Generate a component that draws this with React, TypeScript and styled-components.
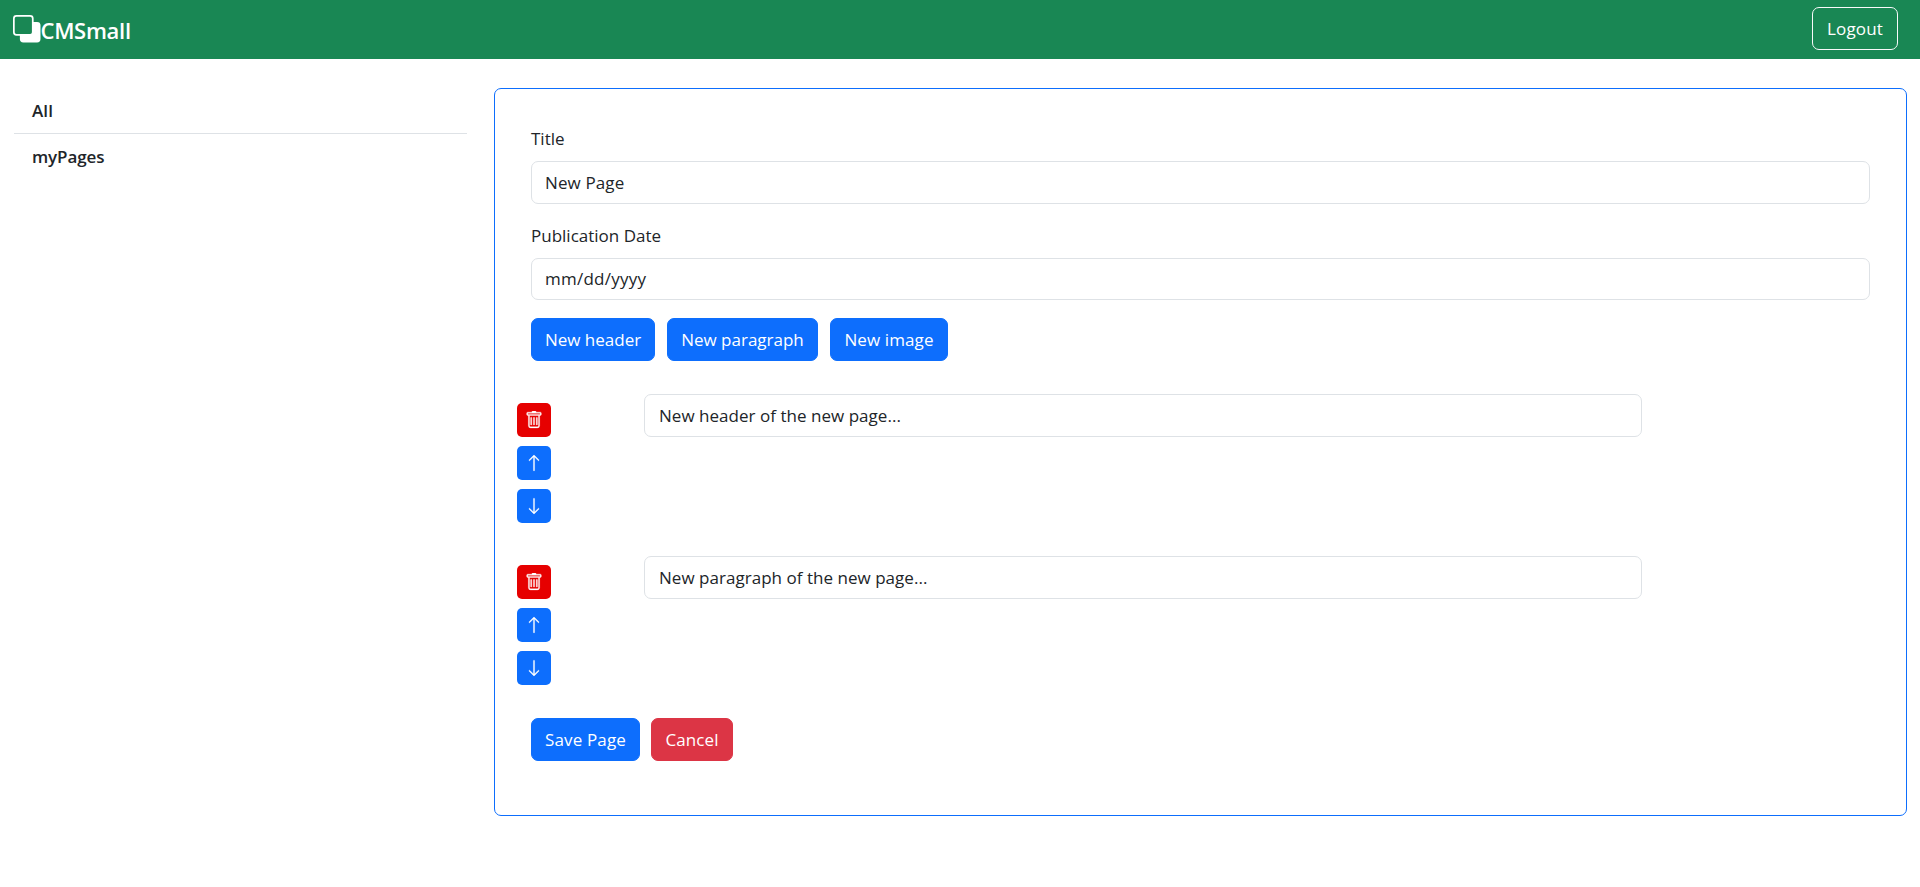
import React from "react";
import styled, { createGlobalStyle } from "styled-components";
import { BsSubtract, BsTrash, BsArrowUp, BsArrowDown } from "react-icons/bs";

const GlobalStyle = createGlobalStyle`
  *, *::before, *::after { box-sizing: border-box; }
  body {
    margin: 0;
    background: #fff;
    color: #212529;
    font-family: "Segoe UI", "Open Sans", "Noto Sans", sans-serif;
    font-size: 17px;
    line-height: 27px;
  }
`;

const Navbar = styled.header`
  display: flex;
  align-items: flex-start;
  justify-content: space-between;
  height: 59px;
  padding: 7px 22px 0 13px;
  background: #198754;
  color: #fff;
`;

const Brand = styled.div`
  display: flex;
  padding-top: 7px;
  font-size: 22px;
  font-weight: 600;
  line-height: 32px;

  svg { margin-top: 1px; }
`;

const Track = styled.span<{ $spacing?: number }>`
  letter-spacing: ${(p) => p.$spacing ?? 0}px;
  white-space: nowrap;
`;

const Button = styled.button<{ $bg?: string; $outline?: boolean; $width: number }>`
  width: ${(p) => p.$width}px;
  height: 43px;
  padding: 0;
  border: 1px solid ${(p) => (p.$outline ? "#f8f9fa" : p.$bg)};
  border-radius: 7px;
  background: ${(p) => p.$bg ?? "transparent"};
  color: #fff;
  font: inherit;
`;

const Layout = styled.div`
  display: flex;
  align-items: flex-start;
  padding: 29px 13px 0 14px;
`;

const Sidebar = styled.nav`
  width: 453px;
  margin-right: 27px;
  font-weight: 600;
`;

const SidebarItem = styled.div`
  height: 46px;
  padding: 9px 18px;
  border-bottom: 1px solid #dee2e6;

  &:last-child { border-bottom: 0; }
`;

const Card = styled.main`
  flex: 1;
  height: 728px;
  padding: 36px;
  border: 1px solid #0d6efd;
  border-radius: 7px;
`;

const Label = styled.label`
  display: block;
  height: 36px;
`;

const Field = styled.div<{ $date?: boolean }>`
  height: ${(p) => (p.$date ? 42 : 43)}px;
  padding: ${(p) => (p.$date ? 6 : 7)}px 13px 0;
  border: 1px solid #dee2e6;
  border-radius: 7px;
`;

const BlockField = styled(Field)`
  padding-left: 14px;
`;

const FormGroup = styled.div`
  margin-bottom: 18px;
`;

const ButtonRow = styled.div<{ $gap: number }>`
  display: flex;
  gap: ${(p) => p.$gap}px;
`;

const Block = styled.section`
  display: grid;
  grid-template-columns: 34px 998px;
  column-gap: 93px;
  align-items: start;
  height: 129px;
  margin: 33px 0 0 -14px;
`;

const Controls = styled.div`
  display: flex;
  flex-direction: column;
  gap: 9px;
  padding-top: 9px;
`;

const IconButton = styled.button<{ $bg: string }>`
  display: flex;
  align-items: center;
  justify-content: center;
  width: 34px;
  height: 34px;
  padding: 0;
  border: 0;
  border-radius: 5px;
  background: ${(p) => p.$bg};
  color: #fff;

  svg {
    stroke: #fff;
    stroke-width: 0.3px;
  }
`;

const Actions = styled(ButtonRow)`
  margin-top: 33px;
`;

const BLUE = "#0d6efd";

const blocks = ["New header of the new page...", "New paragraph of the new page..."];

export default function App() {
  return (
    <>
      <GlobalStyle />
      <Navbar>
        <Brand>
          <BsSubtract size={27.5} />
          <Track $spacing={-0.3}>CMSmall</Track>
        </Brand>
        <Button $outline $width={86}><Track $spacing={0.2}>Logout</Track></Button>
      </Navbar>
      <Layout>
        <Sidebar>
          <SidebarItem><Track $spacing={0.1}>All</Track></SidebarItem>
          <SidebarItem><Track $spacing={-0.1}>myPages</Track></SidebarItem>
        </Sidebar>
        <Card>
          <FormGroup>
            <Label><Track>Title</Track></Label>
            <Field><Track $spacing={0.12}>New Page</Track></Field>
          </FormGroup>
          <FormGroup>
            <Label><Track>Publication Date</Track></Label>
            <Field $date><Track $spacing={0.25}>mm/dd/yyyy</Track></Field>
          </FormGroup>
          <ButtonRow $gap={12}>
            <Button $bg={BLUE} $width={124}><Track>New header</Track></Button>
            <Button $bg={BLUE} $width={151}><Track>New paragraph</Track></Button>
            <Button $bg={BLUE} $width={118}><Track $spacing={0.1}>New image</Track></Button>
          </ButtonRow>
          {blocks.map((text) => (
            <Block key={text}>
              <Controls>
                <IconButton $bg="#e60000" aria-label="Delete"><BsTrash size={18} /></IconButton>
                <IconButton $bg={BLUE} aria-label="Move up"><BsArrowUp size={18} /></IconButton>
                <IconButton $bg={BLUE} aria-label="Move down"><BsArrowDown size={18} /></IconButton>
              </Controls>
              <BlockField><Track $spacing={0.03}>{text}</Track></BlockField>
            </Block>
          ))}
          <Actions $gap={11}>
            <Button $bg={BLUE} $width={109}><Track $spacing={0.15}>Save Page</Track></Button>
            <Button $bg="#dc3545" $width={82}><Track $spacing={0.1}>Cancel</Track></Button>
          </Actions>
        </Card>
      </Layout>
    </>
  );
}
